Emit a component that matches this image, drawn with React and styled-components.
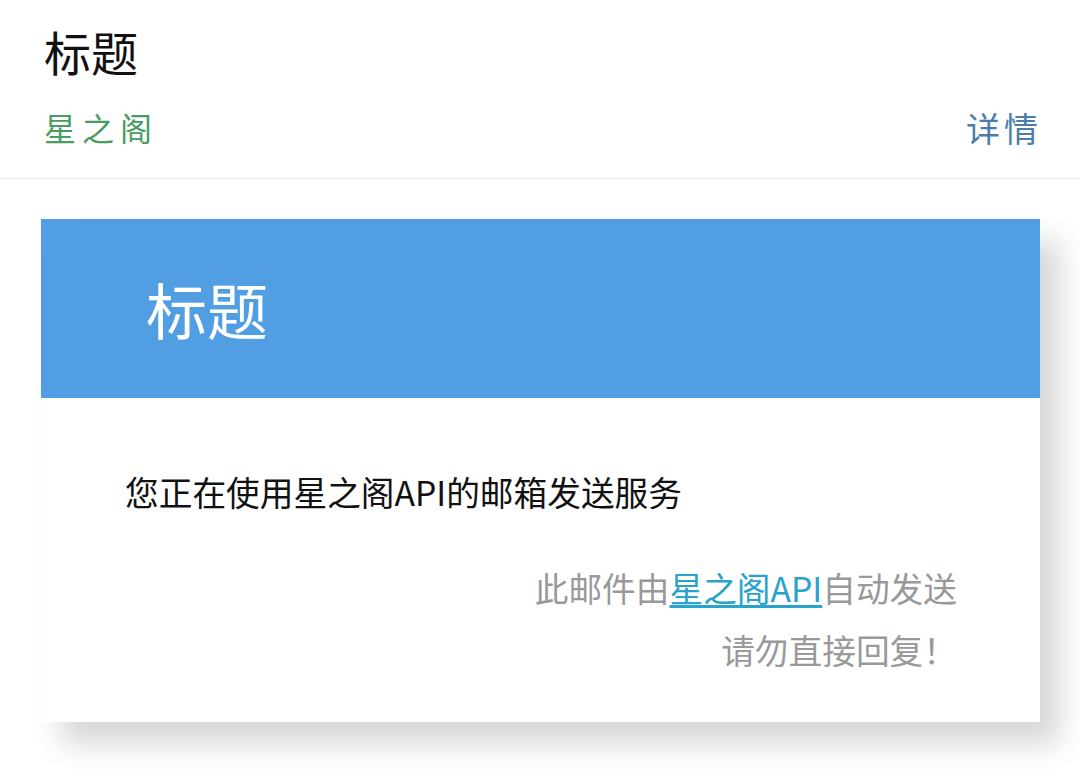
import React from "react";
import styled, { createGlobalStyle } from "styled-components";

const GlobalStyle = createGlobalStyle`
  * {
    box-sizing: border-box;
  }

  body {
    margin: 0;
    background: #fff;
    font-family: "Noto Sans CJK SC", "Noto Sans", sans-serif;
  }
`;

const Page = styled.div`
  width: 1080px;
  height: 776px;
  overflow: hidden;
  background: #fff;
`;

const TopBar = styled.header`
  padding: 21px 38px 26px 44px;
  border-bottom: 1px solid #e8e8e8;

  h1 {
    margin: 0;
    font-size: 47px;
    font-weight: 400;
    line-height: 60px;
    color: #111;
  }
`;

const MetaRow = styled.div`
  display: flex;
  justify-content: space-between;
  align-items: center;
  margin-top: 21px;
  height: 50px;
`;

const MetaText = styled.span`
  font-size: ${(p) => p.$size || 32}px;
  letter-spacing: ${(p) => p.$spacing || 4}px;
  color: ${(p) => p.$color};
`;

const Card = styled.section`
  width: 999px;
  margin: 40px 0 0 41px;
  background: #fff;
  box-shadow: 20px 22px 28px rgba(0, 0, 0, 0.16);
`;

const CardHead = styled.div`
  display: flex;
  align-items: center;
  height: 179px;
  padding-left: 105px;
  background: #519fe2;

  h2 {
    margin: 0;
    font-size: 61px;
    font-weight: 400;
    color: #fff;
    line-height: 1;
  }
`;

const CardBody = styled.div`
  padding: 69px 83px 41px 84px;
`;

const Message = styled.p`
  margin: 0;
  font-size: 33.7px;
  line-height: 50px;
  color: #111;
`;

const Footer = styled.div`
  margin-top: 40px;
  text-align: right;
  font-size: 33.7px;
  line-height: 62px;
  color: #999;

  p {
    margin: 0;
  }

  a {
    color: #2aa3cc;
    text-decoration: underline;
    text-underline-offset: 3px;
  }
`;

export default function App() {
  return (
    <Page>
      <GlobalStyle />
      <TopBar>
        <h1>标题</h1>
        <MetaRow>
          <MetaText $color="#4a9d62" $spacing={6}>星之阁</MetaText>
          <MetaText $color="#4b7dab" $size={34}>详情</MetaText>
        </MetaRow>
      </TopBar>
      <Card>
        <CardHead>
          <h2>标题</h2>
        </CardHead>
        <CardBody>
          <Message>您正在使用星之阁API的邮箱发送服务</Message>
          <Footer>
            <p>
              此邮件由<a href="#">星之阁API</a>自动发送
            </p>
            <p>请勿直接回复！</p>
          </Footer>
        </CardBody>
      </Card>
    </Page>
  );
}
